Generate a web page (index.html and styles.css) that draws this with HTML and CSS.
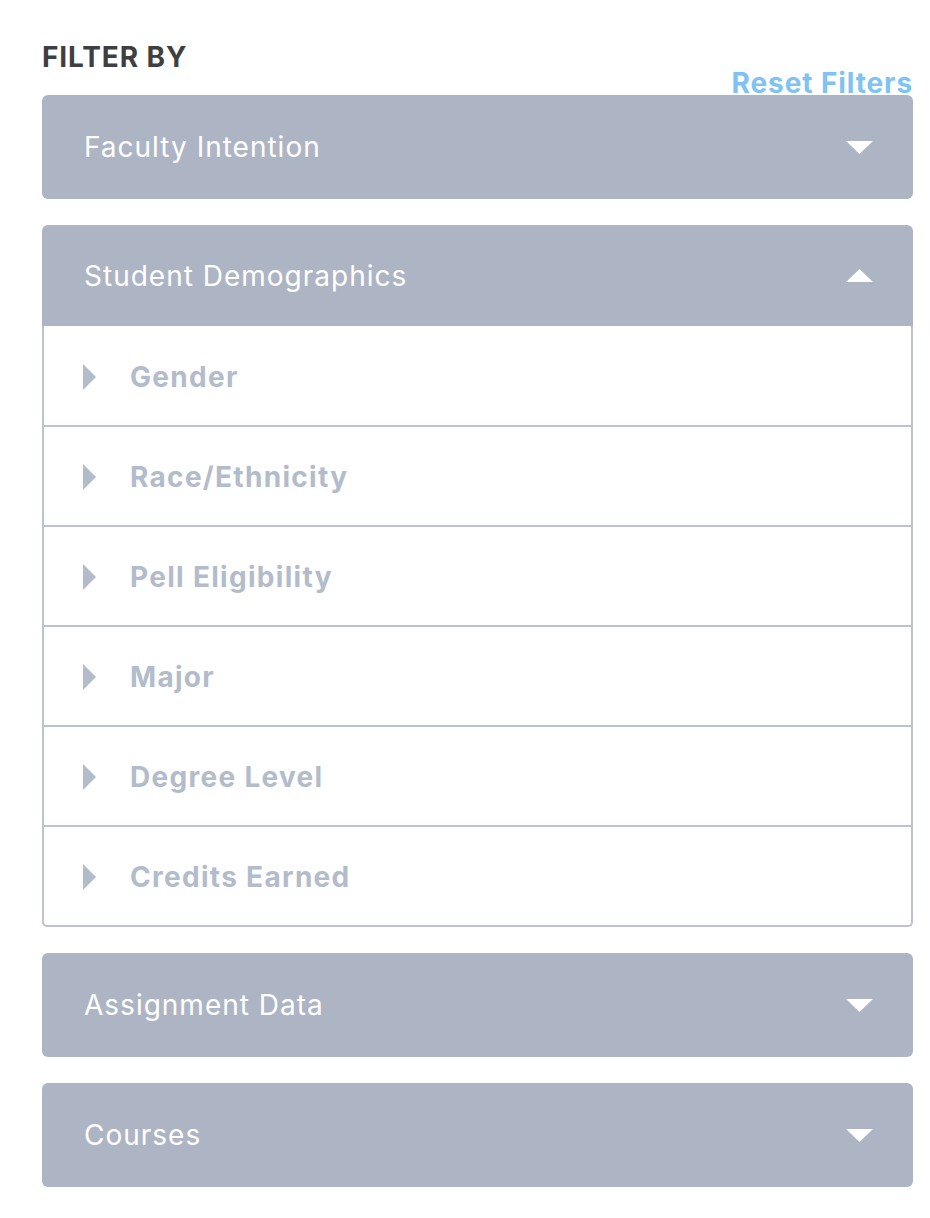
FILE: index.html
```html
<!DOCTYPE html>
<html>
<head>
<meta charset="utf-8">
<link rel="stylesheet" href="styles.css">
</head>
<body>
<div class="sidebar">
  <h2 class="title">FILTER BY</h2>
  <div class="reset-row"><a class="reset">Reset Filters</a></div>
  <div class="panels">
    <div class="panel">
      <div class="panel-head"><span>Faculty Intention</span><svg class="caret" viewBox="0 0 29 15"><path d="M1 1h27L14.5 14z" fill="#fff"/></svg></div>
    </div>
    <div class="panel open">
      <div class="panel-head"><span>Student Demographics</span><svg class="caret" viewBox="0 0 29 15"><path d="M1 14h27L14.5 1z" fill="#fff"/></svg></div>
      <div class="panel-body">
        <div class="row"><svg class="tri" viewBox="0 0 15 28"><path d="M1 1l13 13L1 27z" fill="#b3bccb"/></svg><span>Gender</span></div>
        <div class="row"><svg class="tri" viewBox="0 0 15 28"><path d="M1 1l13 13L1 27z" fill="#b3bccb"/></svg><span>Race/Ethnicity</span></div>
        <div class="row"><svg class="tri" viewBox="0 0 15 28"><path d="M1 1l13 13L1 27z" fill="#b3bccb"/></svg><span>Pell Eligibility</span></div>
        <div class="row"><svg class="tri" viewBox="0 0 15 28"><path d="M1 1l13 13L1 27z" fill="#b3bccb"/></svg><span>Major</span></div>
        <div class="row"><svg class="tri" viewBox="0 0 15 28"><path d="M1 1l13 13L1 27z" fill="#b3bccb"/></svg><span>Degree Level</span></div>
        <div class="row"><svg class="tri" viewBox="0 0 15 28"><path d="M1 1l13 13L1 27z" fill="#b3bccb"/></svg><span>Credits Earned</span></div>
      </div>
    </div>
    <div class="panel">
      <div class="panel-head"><span>Assignment Data</span><svg class="caret" viewBox="0 0 29 15"><path d="M1 1h27L14.5 14z" fill="#fff"/></svg></div>
    </div>
    <div class="panel">
      <div class="panel-head"><span>Courses</span><svg class="caret" viewBox="0 0 29 15"><path d="M1 1h27L14.5 14z" fill="#fff"/></svg></div>
    </div>
  </div>
</div>
</body>
</html>
```
FILE: styles.css
```css
html, body {
  margin: 0;
  padding: 0;
  background: #ffffff;
}
body {
  font-family: Inter, "Noto Sans", sans-serif;
}
.sidebar {
  width: 871px;
  padding: 40px 0 0 42px;
}
.title {
  margin: 0;
  font-size: 28px;
  line-height: 34px;
  font-weight: 700;
  color: #3f3f41;
  letter-spacing: 0.9px;
}
.reset-row {
  display: flex;
  justify-content: flex-end;
  margin-top: -5px;
  margin-bottom: -2px;
}
.reset {
  font-size: 28px;
  line-height: 28px;
  font-weight: 700;
  color: #7ec3f3;
  letter-spacing: 0.9px;
}
.panels {
  display: flex;
  flex-direction: column;
  gap: 26px;
}
.panel-head {
  height: 104px;
  background: #adb5c4;
  border-radius: 6px;
  display: flex;
  align-items: center;
  justify-content: space-between;
  padding: 0 39px 0 42px;
  color: #ffffff;
  font-size: 28px;
  font-weight: 400;
  letter-spacing: 1px;
}
.open .panel-head {
  height: 101px;
  border-radius: 6px 6px 0 0;
}
.caret {
  width: 29px;
  height: 15px;
  display: block;
}
.panel-body {
  border: 2px solid #bcc3cf;
  border-top: none;
  border-radius: 0 0 5px 5px;
}
.row {
  height: 96px;
  display: flex;
  align-items: center;
  padding: 2px 0 0 38px;
  gap: 33px;
  border-bottom: 2px solid #bcc3cf;
  color: #b3bccb;
  font-size: 28px;
  font-weight: 700;
  letter-spacing: 1.3px;
}
.row:first-child {
  height: 97px;
}
.row:last-child {
  border-bottom: none;
}
.tri {
  width: 15px;
  height: 28px;
  display: block;
}
```
